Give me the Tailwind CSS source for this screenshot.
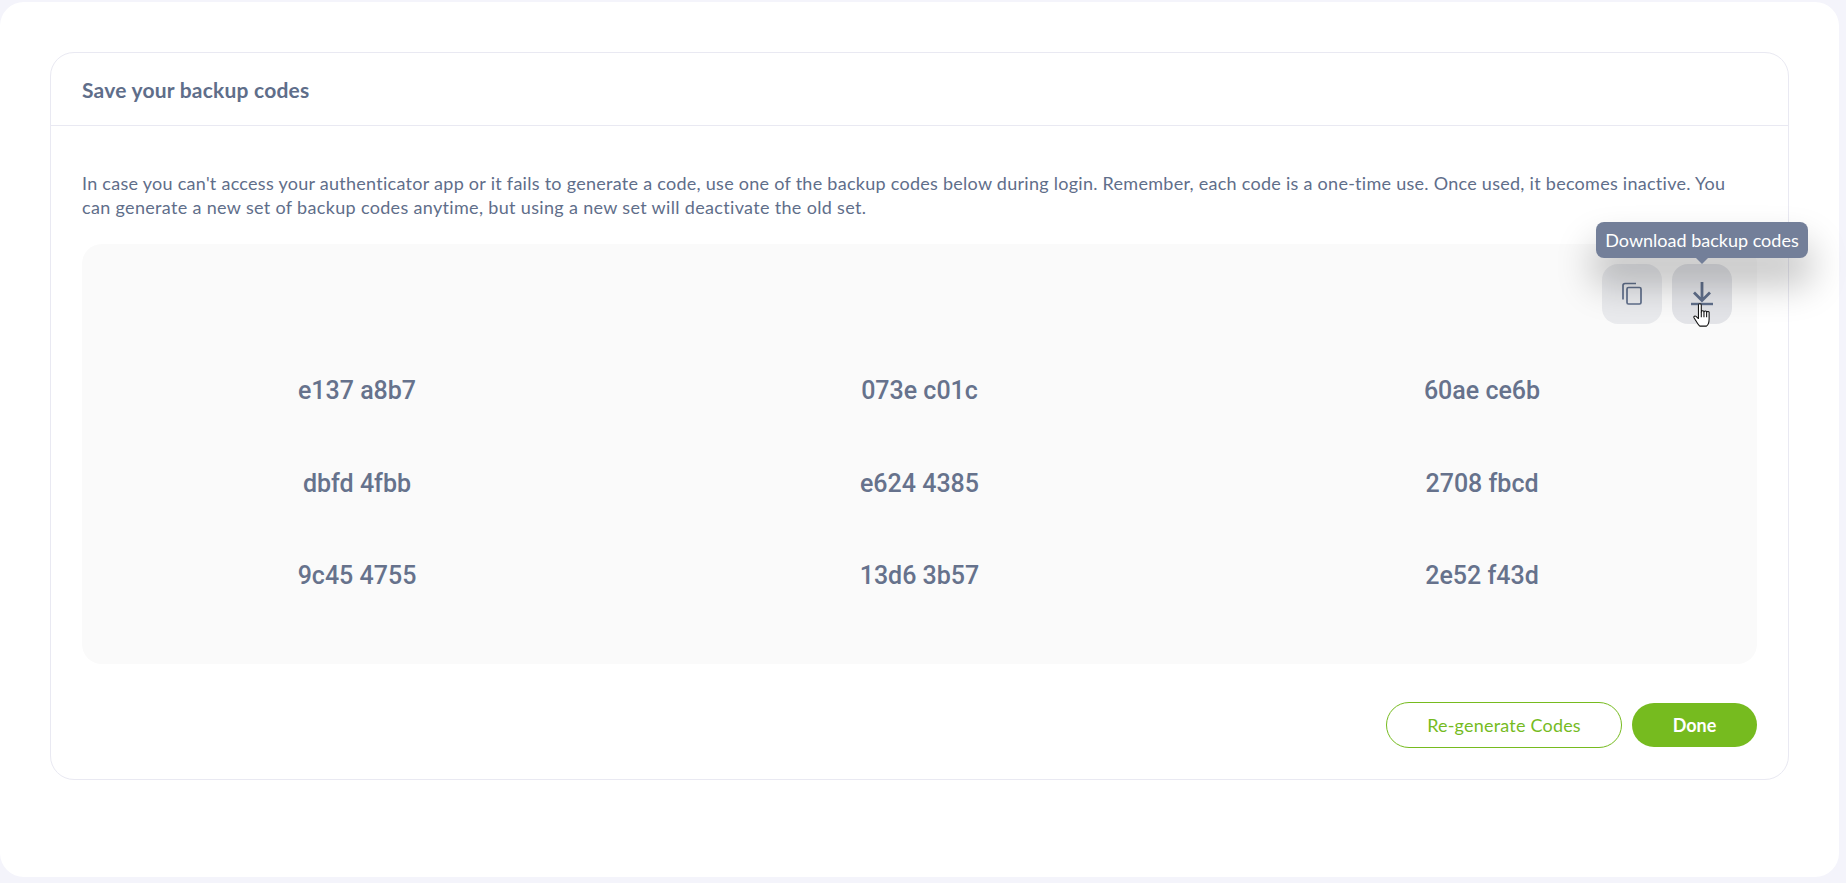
<!DOCTYPE html>
<html lang="en">

<head>
    <meta charset="UTF-8">
    <meta name="viewport" content="width=device-width, initial-scale=1.0">
    <title>Save your backup codes</title>
    <script src="https://cdn.jsdelivr.net/npm/@tailwindcss/browser@4"></script>
</head>

<body class="bg-[#f4f4fb] h-[883px] overflow-hidden font-['Lato','Open_Sans',sans-serif]">

    <!-- White page panel -->
    <main class="mt-[2px] w-[1839px] h-[875px] bg-white rounded-[24px] pt-[50px] px-[50px]">

        <!-- Card -->
        <section class="w-[1739px] h-[728px] border border-[#e9e9f2] rounded-[24px]">
            <header class="h-[73px] border-b border-[#e9e9f2] pl-[31px] pt-[2px] flex items-center">
                <h2 class="text-[21px] tracking-[0.22px] font-bold text-[#5f6e8a]">Save your backup codes</h2>
            </header>

            <div class="px-[31px] pt-[45px]">
                <p class="text-[18px] tracking-[0.27px] leading-[24px] text-[#5f6e8a] whitespace-nowrap">
                    In case you can't access your authenticator app or it fails to generate a code, use one of the backup codes below during login. Remember, each code is a one-time use. Once used, it becomes inactive. You<br>
                    <span class="tracking-[0.33px]">can generate a new set of backup codes anytime, but using a new set will deactivate the old set.</span>
                </p>

                <!-- Codes box -->
                <div class="relative mt-[25px] h-[420px] bg-[#fafafa] rounded-[20px] pt-[131px]">
                    <div class="grid grid-cols-3 gap-x-[12.5px] gap-y-[60.5px] text-center font-['Roboto',sans-serif] font-medium text-[25px] leading-[32px] text-[#66728c]">
                        <div>e137 a8b7</div>
                        <div>073e c01c</div>
                        <div>60ae ce6b</div>
                        <div>dbfd 4fbb</div>
                        <div>e624 4385</div>
                        <div>2708 fbcd</div>
                        <div>9c45 4755</div>
                        <div>13d6 3b57</div>
                        <div>2e52 f43d</div>
                    </div>

                    <!-- Action buttons -->
                    <div class="absolute top-[20px] right-[25px] flex gap-[10px]">
                        <button class="w-[60px] h-[60px] rounded-[16px] bg-[#e9eaed] flex items-center justify-center text-[#5f6e8a]">
                            <svg class="w-[24px] h-[24px]" viewBox="0 0 24 24" fill="none" stroke="currentColor" stroke-width="1.7">
                                <path d="M3 17.500V3.500a2 2 0 0 1 2-2h11"/>
                                <rect x="7" y="5.500" width="14" height="16.500" rx="1.500"/>
                            </svg>
                        </button>
                        <button class="w-[60px] h-[60px] rounded-[16px] bg-[#e3e4e8] flex items-center justify-center text-[#5f6e8a]">
                            <svg class="w-[24px] h-[24px]" viewBox="0 0 24 24" fill="none" stroke="currentColor" stroke-width="2.8">
                                <path d="M12 0v18M4 10.500l8 8 8-8" />
                                <path d="M1 22h22" stroke-width="2.400" />
                            </svg>
                        </button>
                    </div>
                </div>

                <!-- Footer buttons -->
                <div class="flex justify-end items-center gap-[10px] mt-[38px]">
                    <button class="w-[236px] h-[46px] rounded-full border border-[#76bb1f] bg-white text-[#76bb1f] text-[18px] tracking-[0.2px]">Re-generate Codes</button>
                    <button class="w-[125px] h-[44px] rounded-full bg-[#76bb1f] text-white text-[18px] font-bold">Done</button>
                </div>
            </div>
        </section>
    </main>

    <!-- Tooltip -->
    <div class="absolute left-[1596px] top-[222px] w-[212px] h-[36px] rounded-[8px] bg-[#737f99] text-white text-[18px] flex items-center justify-center shadow-[0_24px_36px_4px_rgba(0,0,0,0.22)]">
        Download backup codes
        <div class="absolute left-[100px] top-[36px] w-0 h-0 border-x-[6px] border-x-transparent border-t-[6px] border-t-[#737f99]"></div>
    </div>

    <!-- Hand cursor -->
    <svg class="absolute left-[1693px] top-[303px] w-[18px] h-[24px]" viewBox="0 0 20 27" fill="#fff" stroke="#111" stroke-width="1.2" stroke-linejoin="round">
        <path d="M6 2.500a1.600 1.600 0 0 1 3.200 0V10a1.500 1.500 0 0 1 3 .3 1.500 1.500 0 0 1 3 .4 1.400 1.400 0 0 1 2.800.7V18c0 4-1.500 7-3 8H7.500c-1.500-1-2.500-3-4-5.500L1 16.500c-.6-1.200 1-2.500 2.300-1.500L6 17.500Z"/>
        <path d="M9.200 10v6M12.200 10.300V16M15.200 10.700V16" fill="none"/>
    </svg>

</body>

</html>
